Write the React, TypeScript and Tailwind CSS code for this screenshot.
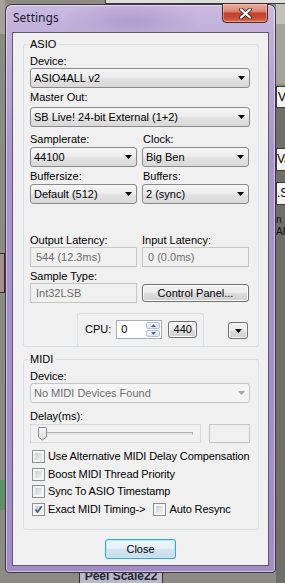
import React from "react";

type ComboProps = { value: string; disabled?: boolean; className?: string };

const Arrow = ({ color = "#000" }: { color?: string }) => (
  <svg width="7" height="4" viewBox="0 0 7 4" className="shrink-0">
    <path d="M0 0h7L3.5 4z" fill={color} />
  </svg>
);

const Combo = ({ value, disabled, className = "" }: ComboProps) => (
  <div
    className={`flex h-[20px] items-center rounded-[3px] border pl-[3px] pr-[4px] ${
      disabled
        ? "border-[#c2c6c9] bg-[#f4f4f4] text-[#6d6d6d]"
        : "border-[#8a8a8a] bg-[linear-gradient(#f5f5f5,#ededed_45%,#e2e2e2_55%,#d8d8d8)] text-black"
    } ${className}`}
  >
    <span className="flex-1 truncate">{value}</span>
    <Arrow color={disabled ? "#a6a6a6" : "#000"} />
  </div>
);

const Field = ({ value }: { value: string }) => (
  <div className="flex h-[20px] items-center border border-[#c6c6c6] bg-[#f0f0f0] pl-[5px] text-[#6d6d6d]">
    {value}
  </div>
);

const Btn = ({ children, className = "" }: { children: React.ReactNode; className?: string }) => (
  <div
    className={`flex items-center justify-center rounded-[3px] border border-[#707070] bg-[linear-gradient(#f2f2f2,#ebebeb_50%,#dddddd_50%,#cfcfcf)] shadow-[inset_0_0_0_1px_#fbfbfb] ${className}`}
  >
    {children}
  </div>
);

const Check = ({ label, checked }: { label: string; checked?: boolean }) => (
  <div className="flex h-[13px] items-center gap-[3px] leading-[13px]">
    <div className="relative h-[13px] w-[13px] shrink-0 border border-[#8e8f8f] bg-[#f5f5f5] p-[2px]">
      <div className="h-full w-full bg-[linear-gradient(135deg,#c9cdd3,#f3f3f3)]" />
      {checked && (
        <svg width="11" height="11" viewBox="0 0 11 11" className="absolute left-0 top-0">
          <path d="M2.5 5.5 L4.5 8 L8.8 2.2" stroke="#4a5d94" strokeWidth="1.8" fill="none" />
        </svg>
      )}
    </div>
    <span className="whitespace-nowrap tracking-[-0.1px]">{label}</span>
  </div>
);

const SpinArrow = ({ up }: { up?: boolean }) => (
  <svg width="5" height="3" viewBox="0 0 5 3">
    <path d={up ? "M0 3h5L2.5 0z" : "M0 0h5L2.5 3z"} fill="#4d6185" />
  </svg>
);

export default function App() {
  return (
    <div className="relative h-[583px] w-[285px] overflow-hidden bg-[#8b8a83] font-['Liberation_Sans',Arial,sans-serif] text-[11px] text-black">
      {/* desktop behind the dialog */}
      <div className="absolute left-[105px] top-0 h-[4px] w-[180px] border-b border-l border-[#3a3a3a] bg-[#dedede]" />
      <div className="absolute left-0 top-0 h-[34px] w-[5px] bg-[#a4a29b]" />
      <div className="absolute left-0 top-[253px] h-[40px] w-[5px] border-y border-r border-[#2c2c2c] bg-[#a68f8f]" />
      <div className="absolute left-0 top-[480px] h-[30px] w-[5px] bg-[#5e8f62]" />
      <div className="absolute right-0 top-[4px] h-[20px] w-[9px] bg-[#c3c2ba]" />
      <div className="absolute right-0 top-[24px] h-[60px] w-[9px] bg-[#a5a49c]" />
      <div className="absolute right-0 top-[86px] h-[22px] w-[9px] overflow-hidden border-y border-l border-[#3a3a3a] bg-[#f2f2f2] pl-[1px] text-[12px] leading-[20px]">
        Vol
      </div>
      <div className="absolute right-0 top-[108px] h-[475px] w-[9px] bg-[#6f6e68]" />
      <div className="absolute right-0 top-[148px] h-[23px] w-[9px] overflow-hidden border-y border-l border-[#3a3a3a] bg-[#f2f2f2] text-[12px] leading-[21px]">
        Va
      </div>
      <div className="absolute right-0 top-[182px] h-[23px] w-[9px] overflow-hidden border-y border-l border-[#3a3a3a] bg-[#f2f2f2] text-[12px] leading-[21px]">
        .SI
      </div>
      <div className="absolute right-0 top-[214px] h-[11px] w-[9px] overflow-hidden text-[10px] leading-[11px] text-[#111]">
        n
      </div>
      <div className="absolute right-0 top-[226px] h-[11px] w-[9px] overflow-hidden text-[10px] leading-[11px] text-[#111]">
        AP
      </div>
      <div className="absolute left-[79px] top-[563px] h-[24px] w-[84px] overflow-hidden border border-[#2e2e2e] bg-[#b9b8c6] text-center text-[12px] font-bold leading-[24px] text-[#262636]">
        Peel Scale22
      </div>

      {/* dialog window */}
      <div className="absolute left-[5px] top-[4px] flex h-[569px] w-[271px] flex-col rounded-t-[7px] rounded-b-[4px] border border-[#3b3a44] bg-[image:radial-gradient(ellipse_70px_22px_at_125px_16px,#b29dcf,transparent),linear-gradient(180deg,#cabbe0,#c1afd9_28px,#aa94cb_150px,#a38cc6)] px-[6px] pb-[6px] shadow-[inset_0_0_0_1px_rgba(255,255,255,0.45)]">
        <div className="flex h-[27px] shrink-0 items-start justify-between">
          <span className="pl-[1px] pt-[5px] font-['Noto_Sans',sans-serif] text-[12px] leading-[16px] text-[#1d1b33]">
            Settings
          </span>
          <div className="mr-[1px] mt-[-2px] flex h-[20px] w-[46px] items-center justify-center rounded-b-[4px] border border-[#4b2424] bg-[linear-gradient(#e9ab9d,#d98a78_40%,#c3412b_52%,#c84a32_75%,#d7704f)] shadow-[inset_0_0_0_1px_rgba(255,210,200,0.5)]">
            <svg width="13" height="11" viewBox="0 0 13 11">
              <path d="M2 1.5 L11 9.5 M11 1.5 L2 9.5" stroke="#5a2727" strokeWidth="4" strokeLinecap="round" />
              <path d="M2 1.5 L11 9.5 M11 1.5 L2 9.5" stroke="#ffffff" strokeWidth="2.2" strokeLinecap="round" />
            </svg>
          </div>
        </div>

        <div className="flex flex-1 flex-col border border-[#5e5a6e] bg-[#f0f0f0]">
          {/* ASIO */}
          <fieldset className="ml-[10px] mt-[5px] w-[236px] rounded-[3px] border border-[#d5dfe5] pl-[6px] pr-[8px]">
            <legend className="-ml-[2px] px-[2px] leading-[13px]">ASIO</legend>
            <div className="flex w-[220px] flex-col">
              <div className="mt-[4px] h-[13px] leading-[13px]">Device:</div>
              <Combo value="ASIO4ALL v2" />
              <div className="mt-[3px] h-[13px] leading-[13px]">Master Out:</div>
              <Combo value="SB Live! 24-bit External (1+2)" className="mt-[3px]" />

              <div className="mt-[6px] grid grid-cols-[107px_107px] gap-x-[5px]">
                <div className="h-[13px] leading-[13px]">Samplerate:</div>
                <div className="h-[13px] pl-[1px] leading-[13px]">Clock:</div>
                <Combo value="44100" className="mt-[1px]" />
                <Combo value="Big Ben" className="mt-[1px]" />
              </div>
              <div className="mt-[3px] grid grid-cols-[107px_107px] gap-x-[5px]">
                <div className="h-[13px] leading-[13px]">Buffersize:</div>
                <div className="h-[13px] pl-[1px] leading-[13px]">Buffers:</div>
                <Combo value="Default (512)" className="mt-[1px]" />
                <Combo value="2 (sync)" className="mt-[1px]" />
              </div>

              <div className="mt-[30px] grid grid-cols-[107px_107px] gap-x-[5px]">
                <div className="h-[13px] leading-[13px]">Output Latency:</div>
                <div className="h-[13px] leading-[13px]">Input Latency:</div>
                <Field value="544 (12.3ms)" />
                <Field value="0 (0.0ms)" />
              </div>
              <div className="mt-[3px] grid grid-cols-[107px_107px] gap-x-[5px]">
                <div className="h-[13px] leading-[13px]">Sample Type:</div>
                <div />
                <Field value="Int32LSB" />
                <Btn className="mt-[1px] h-[18px]">Control Panel...</Btn>
              </div>

              <div className="mt-[10px] flex h-[33px] items-start">
                <div className="ml-[47px] flex h-[33px] w-[127px] items-start rounded-t-[3px] border-x border-t border-[#d5dfe5] pl-[7px] pt-[6px]">
                  <span className="mt-[3px] leading-[13px]">CPU:</span>
                  <div className="ml-[5px] flex h-[19px] w-[46px] border border-[#abadb3] bg-white">
                    <span className="flex-1 pl-[4px] leading-[17px]">0</span>
                    <div className="flex w-[16px] flex-col gap-[1px] p-[1px]">
                      <div className="flex flex-1 items-center justify-center rounded-[2px] border border-[#b4c2d4] bg-[linear-gradient(#f4f7fb,#dbe4ef)]">
                        <SpinArrow up />
                      </div>
                      <div className="flex flex-1 items-center justify-center rounded-[2px] border border-[#b4c2d4] bg-[linear-gradient(#f4f7fb,#dbe4ef)]">
                        <SpinArrow />
                      </div>
                    </div>
                  </div>
                  <Btn className="ml-[6px] mt-[1px] h-[17px] w-[29px]">440</Btn>
                </div>
                <Btn className="ml-[24px] mt-[9px] h-[17px] w-[20px]">
                  <Arrow />
                </Btn>
              </div>
            </div>
          </fieldset>

          {/* MIDI */}
          <fieldset className="ml-[10px] mt-[6px] w-[236px] rounded-[3px] border border-[#d5dfe5] pb-[13px] pl-[6px] pr-[8px]">
            <legend className="-ml-[2px] px-[2px] leading-[13px]">MIDI</legend>
            <div className="flex w-[220px] flex-col">
              <div className="mt-[4px] h-[13px] leading-[13px]">Device:</div>
              <Combo value="No MIDI Devices Found" disabled />
              <div className="mt-[7px] h-[13px] leading-[13px]">Delay(ms):</div>
              <div className="mt-[1px] flex h-[19px] gap-[8px]">
                <div className="relative h-[19px] w-[171px] border border-[#d9d9d9] bg-[#f0f0f0]">
                  <div className="mx-[7px] mt-[7px] h-[3px] border border-[#b0b0b0] border-b-[#e4e4e4] bg-[#e7eaea]" />
                  <svg width="9" height="14" viewBox="0 0 9 14" className="absolute left-[7px] top-[2px]">
                    <defs>
                      <linearGradient id="thumb" x1="0" y1="0" x2="0" y2="1">
                        <stop offset="0" stopColor="#f7f7f7" />
                        <stop offset="1" stopColor="#d8d8d8" />
                      </linearGradient>
                    </defs>
                    <path d="M1.5 0.5 H7.5 Q8.5 0.5 8.5 1.5 V10 L4.5 13 L0.5 10 V1.5 Q0.5 0.5 1.5 0.5 Z" fill="url(#thumb)" stroke="#8a8a8a" />
                  </svg>
                </div>
                <div className="h-[19px] w-[41px] border border-[#c6c6c6] bg-[#f0f0f0]" />
              </div>
              <div className="ml-[2px] mt-[7px]">
                <Check label="Use Alternative MIDI Delay Compensation" />
              </div>
              <div className="ml-[2px] mt-[5px]">
                <Check label="Boost MIDI Thread Priority" />
              </div>
              <div className="ml-[2px] mt-[4px]">
                <Check label="Sync To ASIO Timestamp" />
              </div>
              <div className="ml-[2px] mt-[5px] flex gap-[8px]">
                <Check label="Exact MIDI Timing->" checked />
                <Check label="Auto Resync" />
              </div>
            </div>
          </fieldset>

          <div className="mx-auto mt-[9px] flex h-[20px] w-[71px] items-center justify-center rounded-[3px] border border-[#33a6dc] bg-[linear-gradient(#eef6fb,#e4eff7_50%,#d4e4ef_50%,#cadce9)] shadow-[inset_0_0_0_1px_#b8ecfd]">
            Close
          </div>
        </div>
      </div>
    </div>
  );
}
